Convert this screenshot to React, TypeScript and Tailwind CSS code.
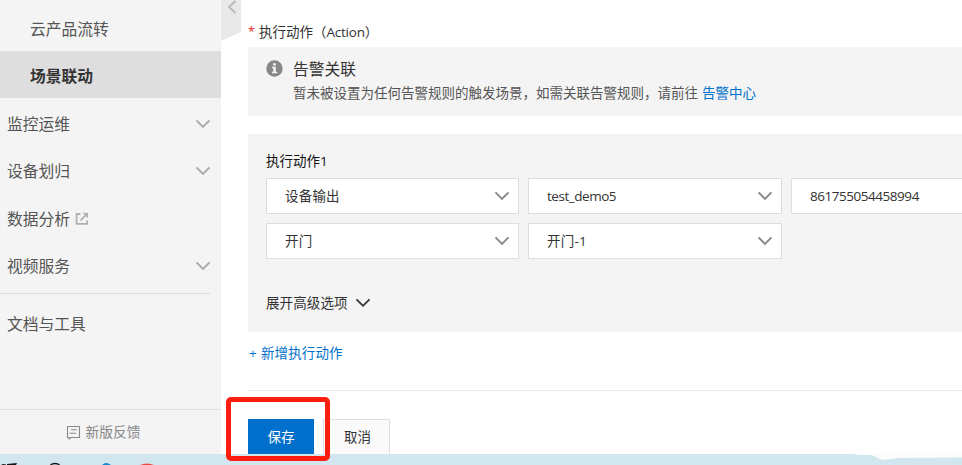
import React from "react";

const SANS = "font-['Open_Sans','Noto_Sans_CJK_SC',sans-serif]";

function Chevron({ className, thick = 1.9 }: { className: string; thick?: number }) {
  return (
    <svg viewBox="0 0 16 10" className={`h-[10px] w-4 shrink-0 ${className}`} fill="none" stroke="currentColor" strokeWidth={thick}>
      <path d="M1.5 1.3 L8 7.8 L14.5 1.3" />
    </svg>
  );
}

function ExternalIcon() {
  return (
    <svg viewBox="0 0 14 14" className="ml-[5px] h-[14px] w-[14px] text-[#b0b0b0]" fill="none" stroke="currentColor" strokeWidth="1.8">
      <path d="M5.5 2 H1.6 V11.8 H12 V8.5" />
      <path d="M5.5 8.3 L10.5 3.3" />
      <path d="M7.5 0.8 H13 V6.3 Z" fill="currentColor" stroke="none" />
    </svg>
  );
}

function NavItem({ label, arrow, external }: { label: string; arrow?: boolean; external?: boolean }) {
  return (
    <div className="flex h-[47.3px] items-center pr-[10px] pb-px pl-[7px]">
      <span>{label}</span>
      {external && <ExternalIcon />}
      {arrow && <Chevron className="ml-auto text-[#a9a9a9]" />}
    </div>
  );
}

function Sidebar() {
  return (
    <aside className="flex w-[221px] shrink-0 flex-col bg-[#f4f4f4] text-[15.75px] leading-5 text-[#555]">
      <div className="flex h-[51px] items-center pt-[6px] pl-[30px]">云产品流转</div>
      <div className="flex h-[47px] items-center bg-[#dedede] pl-[30px] font-bold text-[#333]">
        <span className="pt-[3px]">场景联动</span>
      </div>
      <div className="h-[192px] pt-[3px]">
        <NavItem label="监控运维" arrow />
        <NavItem label="设备划归" arrow />
        <NavItem label="数据分析" external />
        <NavItem label="视频服务" arrow />
      </div>
      <div className="mt-[3px] h-px w-[210px] bg-[#dedede]" />
      <div className="pt-[20px] pl-[7px]">文档与工具</div>
      <div className="mt-auto flex h-[45px] items-center justify-center gap-[4px] border-t border-[#dedede] pr-[14px] text-[13.8px] text-[#888]">
        <svg viewBox="0 0 15 15" className="h-[15px] w-[15px]" fill="none" stroke="currentColor" strokeWidth="1.1">
          <path d="M1.5 1.5 H13.5 V12.5 H5 L3 14 V12.5 H1.5 Z" strokeLinejoin="round" />
          <path d="M5 4.7 H11 M3.5 8.2 H10" />
        </svg>
        <span>新版反馈</span>
      </div>
    </aside>
  );
}

function Select({ value, arrow = true }: { value: string; arrow?: boolean }) {
  const latin = /^[\x20-\x7e]+$/.test(value);
  return (
    <div className="flex h-9 items-center justify-between border border-[#dedede] bg-white pr-[8px] pl-[18px] text-[#333]">
      <span className={`whitespace-nowrap ${latin ? "tracking-[-0.46px]" : "tracking-[0.2px]"}`}>{value}</span>
      {arrow && <Chevron className="text-[#888]" />}
    </div>
  );
}

function Taskbar() {
  return (
    <footer className="h-[11px] shrink-0">
      <svg viewBox="0 0 962 11" className="block h-[11px] w-[962px]">
        <rect width="962" height="11" fill="#d1e6ee" />
        <path d="M854 0 L858 1 H871 Q877 3 882 6 Q892 5 899 4 L962 3.5 V0 Z" fill="#fbfcfc" />
        <path d="M1 11 L3 10 L6 10.4 V11 Z M7 10 L17 9 L16 11 H7 Z" fill="#151515" />
        <path d="M50.5 11 Q52 9.5 55 9.5 Q58 9.5 59.5 11" fill="none" stroke="#151515" strokeWidth="1.3" />
        <path d="M102 11 Q106 7 111 11 Z" fill="#168dcc" />
        <path d="M140 11 Q147 8 154 11 Z" fill="#e84a45" />
      </svg>
    </footer>
  );
}

export default function App() {
  return (
    <div className={`relative flex h-[465px] w-[962px] flex-col overflow-hidden bg-white text-[13.5px] leading-5 ${SANS}`}>
      <div className="flex h-[454px] overflow-hidden">
        <Sidebar />
        <main className="flex w-[741px] shrink-0 flex-col pl-[27px]">
          <div className="flex h-[47px] shrink-0 items-start pt-[22px] text-[#333]">
            <span className="mr-[4px] text-[12.5px] text-[#e0301e]">*</span>
            <span>执行动作（<span className="tracking-[-0.2px]">Action</span>）</span>
          </div>
          <section className="flex h-[69px] shrink-0 bg-[#f4f4f4] pl-[18px]">
            <svg viewBox="0 0 17 17" className="mt-[13px] h-[17px] w-[17px]">
              <circle cx="8.5" cy="8.5" r="8.2" fill="#888" />
              <path d="M7 3.3 H9.8 V5.4 H7 Z M6 6.7 H9.8 V11.7 H11.2 V13.2 H6 V11.7 H7.3 V8.2 H6 Z" fill="#f4f4f4" />
            </svg>
            <div className="pt-[12px] pl-[10px]">
              <h2 className="text-[15.75px] leading-5 text-[#333]">告警关联</h2>
              <p className="pt-[4px] whitespace-nowrap text-[#555]">
                暂未被设置为任何告警规则的触发场景，如需关联告警规则，请前往
                <a className="ml-[4px] text-[#0070cc]">告警中心</a>
              </p>
            </div>
          </section>
          <section className="mt-[18px] h-[198px] shrink-0 overflow-hidden bg-[#f4f4f4] pt-[17px] pl-[18px]">
            <div className="mb-[7px] text-[#111]">执行动作1</div>
            <div className="grid grid-cols-[253px_254px_254px] gap-[9px]">
              <Select value="设备输出" />
              <Select value="test_demo5" />
              <Select value="861755054458994" arrow={false} />
              <Select value="开门" />
              <Select value="开门-1" />
            </div>
            <div className="flex items-center gap-[7px] pt-[34px] text-[#333]">
              <span className="tracking-[0.1px]">展开高级选项</span>
              <Chevron className="text-[#333]" thick={1.8} />
            </div>
          </section>
          <a className="mt-[11px] pl-[1px] tracking-[0.15px] text-[#0070cc]">
            <span className="mr-[4px]">+</span>新增执行动作
          </a>
          <div className="mt-[27px] h-px shrink-0 bg-[#ebebeb]" />
          <div className="mt-[28px] flex gap-[9px]">
            <button className="h-9 w-[66px] shrink-0 bg-[#0070cc] text-white">保存</button>
            <button className="h-9 w-[67px] shrink-0 border border-[#dedede] bg-[#fafafa] pl-[2px] text-[#333]">取消</button>
          </div>
        </main>
      </div>
      <Taskbar />
      <svg viewBox="0 0 20 42" className="absolute top-0 left-[221px] h-[42px] w-5">
        <path d="M0 0 H20 V32 L0 41 Z" fill="#e9e9e9" />
        <path d="M14.5 1 L8 7 L14.5 13" fill="none" stroke="#b8b8b8" strokeWidth="1.8" />
      </svg>
      <div className="absolute top-[397px] left-[226px] h-[64px] w-[104px] rounded-[5px] border-5 border-[#ff1d10]" />
    </div>
  );
}
